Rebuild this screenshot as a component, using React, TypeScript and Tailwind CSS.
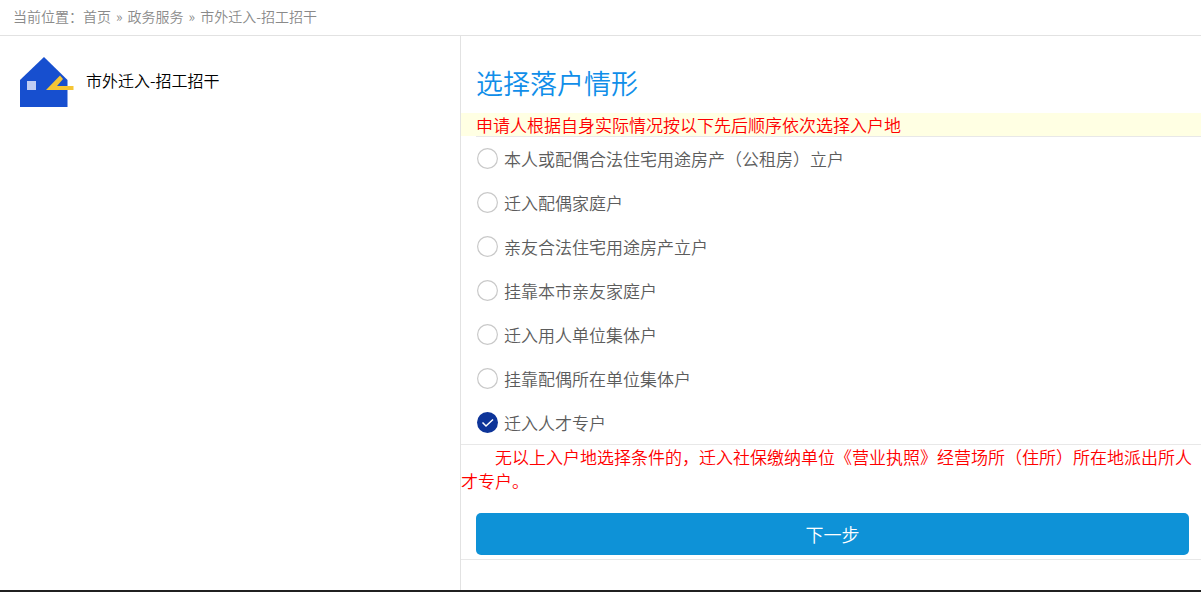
import { useState } from "react";

const options = [
  "本人或配偶合法住宅用途房产（公租房）立户",
  "迁入配偶家庭户",
  "亲友合法住宅用途房产立户",
  "挂靠本市亲友家庭户",
  "迁入用人单位集体户",
  "挂靠配偶所在单位集体户",
  "迁入人才专户",
];

function HouseIcon() {
  return (
    <svg width="54" height="52" viewBox="0 0 54 52" aria-hidden="true" className="shrink-0">
      <path d="M24 1 47.500 24V51H0V24Z" fill="#174fcf" />
      <rect x="7" y="25" width="9" height="9" fill="#c0cdf3" />
      <path d="M40 19.500 43 23 37 30H53.500V34H26Z" fill="#f5c535" />
    </svg>
  );
}

function Breadcrumb() {
  return (
    <nav className="flex h-9 items-center border-b border-[#e2e2e2] px-[13px] pb-0.5 text-[14px] text-[#8a8a8a]">
      <span>当前位置：</span>
      <a href="#home">首页</a>
      <span className="px-[5px]">»</span>
      <a href="#services">政务服务</a>
      <span className="px-[5px]">»</span>
      <span>市外迁入-招工招干</span>
    </nav>
  );
}

function Option({ label, checked, onSelect }: { label: string; checked: boolean; onSelect: () => void }) {
  return (
    <label className="flex h-11 cursor-pointer items-center gap-1.5 border-t border-transparent pl-px first:border-[#e8e8e8]">
      <input type="radio" name="situation" checked={checked} onChange={onSelect} className="peer sr-only" />
      <svg width="21" height="21" viewBox="0 0 21 21" fill="none" aria-hidden="true" className="shrink-0">
        {checked ? (
          <>
            <circle cx="10.500" cy="10.500" r="10.500" fill="#0d3499" />
            <path d="m5.500 10.500 3.500 3.500 7-6.500" stroke="#fff" strokeWidth="1.500" />
          </>
        ) : (
          <circle cx="10.500" cy="10.500" r="9.900" stroke="#c9c9c9" strokeWidth="1.200" />
        )}
      </svg>
      <span>{label}</span>
    </label>
  );
}

export default function App() {
  const [selected, setSelected] = useState(6);
  return (
    <div className="flex min-h-screen flex-col border-b-2 border-[#202020] bg-white font-['Noto_Sans_CJK_SC',sans-serif] font-[350]">
      <Breadcrumb />
      <div className="flex flex-1">
        <aside className="w-[460px] shrink-0 px-5 pt-5">
          <div className="flex items-center gap-3">
            <HouseIcon />
            <h2 className="pb-1 text-[16px] text-black">市外迁入-招工招干</h2>
          </div>
        </aside>
        <main className="min-w-0 flex-1 border-l border-[#e2e2e2] text-[17px] leading-6">
          <h1 className="px-[15px] pt-[27px] pb-2.5 text-[27px] leading-10 text-[#108ee9]">选择落户情形</h1>
          <p className="bg-[#ffffe3] px-[15px] leading-[23px] text-[#ff0000]">
            申请人根据自身实际情况按以下先后顺序依次选择入户地
          </p>
          <form onSubmit={(event) => event.preventDefault()}>
            <div role="radiogroup" aria-label="选择落户情形" className="pl-[15px] text-[#5c5c5c]">
              {options.map((label, index) => (
                <Option key={label} label={label} checked={index === selected} onSelect={() => setSelected(index)} />
              ))}
            </div>
            <p className="border-t border-[#e8e8e8] indent-[2em] text-[#ff0000]">
              无以上入户地选择条件的，迁入社保缴纳单位《营业执照》经营场所（住所）所在地派出所人才专户。
            </p>
            <div className="border-b border-[#e8e8e8] pt-5 pr-3 pb-1 pl-[15px]">
              <button type="submit" className="h-[42px] w-full rounded-[5px] bg-[#0e92d7] text-[18px] text-white">
                下一步
              </button>
            </div>
          </form>
        </main>
      </div>
    </div>
  );
}
